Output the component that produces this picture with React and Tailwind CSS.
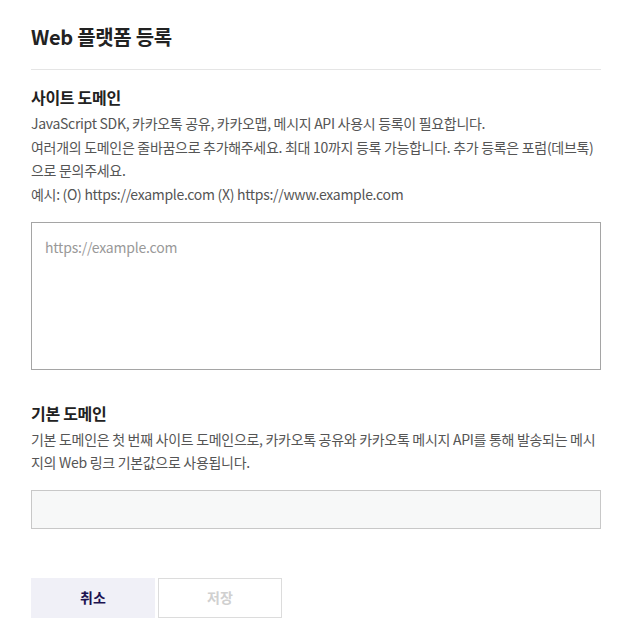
export default function App() {
  return (
    <div className="min-h-screen bg-white px-[31px] pt-[22px] font-['Noto_Sans_CJK_KR','Noto_Sans',sans-serif] text-[#222]">
      <h1 className="text-[20px] font-bold leading-[30px] tracking-[-0.3px]">Web 플랫폼 등록</h1>
      <div className="mt-[17px] h-px w-[570px] bg-[#e5e5e5]" />

      <section className="mt-[15px]">
        <h2 className="text-[16px] font-bold leading-[24px] tracking-[-0.3px]">사이트 도메인</h2>
        <div className="mt-[3px] w-[570px] break-all text-[14px] leading-[23.7px] tracking-[-0.3px] text-[#555]">
          <p>JavaScript SDK, 카카오톡 공유, 카카오맵, 메시지 API 사용시 등록이 필요합니다.</p>
          <p>여러개의 도메인은 줄바꿈으로 추가해주세요. 최대 10까지 등록 가능합니다. 추가 등록은 포럼(데브톡)으로 문의주세요.</p>
          <p>예시: (O) https://example.com (X) https://www.example.com</p>
        </div>
        <textarea
          placeholder="https://example.com"
          className="mt-[15px] block h-[148px] w-[570px] resize-none border border-[#a5a5a5] px-[13px] py-[14px] text-[14px] leading-[20px] tracking-[-0.2px] text-[#222] placeholder:text-[#999] outline-none"
        />
      </section>

      <section className="mt-[31px]">
        <h2 className="text-[16px] font-bold leading-[24px] tracking-[-0.3px]">기본 도메인</h2>
        <p className="mt-[3px] w-[570px] break-all text-[14px] leading-[23.5px] tracking-[-0.3px] text-[#555]">
          기본 도메인은 첫 번째 사이트 도메인으로, 카카오톡 공유와 카카오톡 메시지 API를 통해 발송되는 메시지의 Web 링크 기본값으로 사용됩니다.
        </p>
        <div className="mt-[15px] h-[39px] w-[570px] border border-[#c8c8c8] bg-[#f7f8f8]" />
      </section>

      <div className="mt-[49px] flex gap-[3px]">
        <button className="h-[40px] w-[124px] bg-[#f0f0f7] text-[14px] font-bold text-[#1c1250]">취소</button>
        <button className="h-[40px] w-[124px] border border-[#dcdcdc] bg-white text-[14px] font-bold text-[#d0d0d0]">저장</button>
      </div>
    </div>
  )
}
